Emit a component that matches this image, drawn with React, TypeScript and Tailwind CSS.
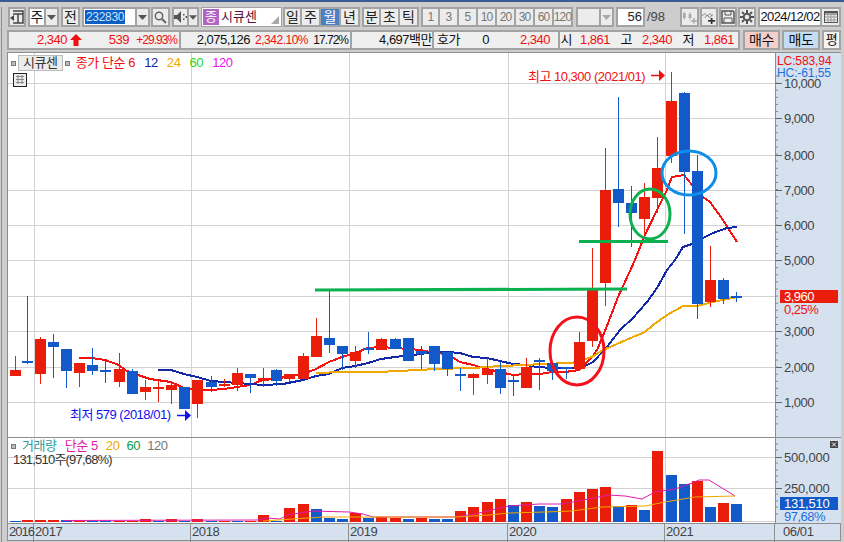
import { ReactNode } from "react";
import { twMerge } from "tailwind-merge";

const RED = "#ea1c0a";
const BLUE = "#1259c9";
const GRID = "#d2d2d2";

// x, wick top, wick bottom, body top, body bottom, up
const candles: [number, number, number, number, number, number][] = [
  [15, 356, 376, 370, 376, 1], [27, 296, 364, 361, 363, 0], [40, 337, 384, 339, 374, 1], [53, 334, 378, 342, 347, 0],
  [66, 349, 388, 349, 371, 0], [79, 363, 387, 363, 373, 1], [92, 348, 375, 365, 371, 0], [105, 359, 383, 370, 372, 0],
  [119, 353, 387, 369, 382, 1], [132, 369, 394, 371, 394, 0], [145, 380, 400, 387, 392, 1], [158, 381, 402, 387, 389, 1],
  [171, 382, 404, 385, 390, 1], [184, 387, 409, 387, 409, 0], [197, 380, 418, 380, 404, 1], [211, 376, 392, 382, 387, 0],
  [224, 379, 387, 384, 386, 1], [237, 368, 391, 373, 385, 1], [250, 374, 393, 374, 378, 0], [263, 368, 387, 378, 381, 1],
  [276, 369, 386, 370, 381, 0], [289, 374, 382, 374, 379, 1], [303, 353, 379, 356, 379, 1], [316, 318, 357, 336, 357, 1],
  [329, 290, 353, 338, 345, 0], [342, 346, 370, 346, 354, 0], [355, 346, 368, 352, 361, 1], [368, 332, 354, 348, 350, 0],
  [381, 338, 350, 339, 350, 1], [395, 338, 349, 339, 349, 0], [408, 338, 361, 338, 361, 0], [421, 346, 369, 351, 354, 0],
  [434, 346, 371, 346, 364, 0], [447, 352, 376, 352, 369, 0], [460, 368, 391, 374, 375, 0], [473, 373, 395, 374, 378, 1],
  [487, 358, 384, 369, 375, 1], [500, 362, 394, 369, 388, 0], [513, 375, 396, 380, 382, 0], [526, 358, 388, 367, 388, 1],
  [539, 358, 390, 360, 362, 0], [552, 363, 380, 363, 371, 0], [566, 367, 379, 367, 369, 0], [579, 332, 370, 342, 369, 1],
  [592, 248, 347, 290, 341, 1], [605, 148, 306, 190, 283, 1], [618, 97, 227, 189, 203, 0], [631, 186, 247, 203, 213, 0],
  [644, 183, 235, 197, 219, 1], [657, 137, 213, 168, 198, 1], [671, 72, 163, 101, 156, 1], [684, 92, 234, 93, 172, 0],
  [697, 155, 319, 171, 304, 0], [710, 246, 307, 280, 302, 1], [723, 278, 304, 280, 299, 0], [736, 292, 302, 296, 298, 0],
];

// top of the volume bar and its colour, same order as candles
const volumes: [number, number][] = [
  [521, 0], [520, 1], [520, 1], [520, 1], [520, 0], [521, 1], [521, 0], [521, 0], [521, 1], [521, 1], [519, 1], [521, 0],
  [519, 1], [521, 0], [519, 1], [521, 0], [521, 1], [521, 0], [521, 1], [515, 1], [521, 0], [508, 1], [504, 1], [509, 0],
  [518, 0], [519, 0], [513, 1], [518, 0], [517, 1], [518, 1], [519, 0], [518, 1], [519, 0], [519, 0], [511, 1], [507, 1],
  [502, 1], [499, 1], [505, 0], [502, 1], [506, 0], [507, 0], [499, 1], [492, 1], [489, 1], [487, 1], [506, 0], [505, 1],
  [510, 0], [451, 1], [475, 0], [484, 0], [481, 1], [507, 0], [503, 1], [504, 0],
];

const ma6 = "79,358 95,358.5 105,360 119,365 125,370 135,374 150,379 171,382 184,388 197,390 211,390 224,389 237,387 250,385 263,380 276,379 289,376 303,374 316,369 329,362 342,357 355,353 368,348 381,347 395,348 408,349 421,350 434,353 447,354 460,362 473,365 487,369 500,372 513,375 526,374 540,374 552,372 565,372 579,370 592,357 597,350 605,331 618,297 635,260 644,237 657,210 666,192 672,177 684,175 692,185 703,197 710,202 723,220 737,242";
const ma12 = "158,370 171,370 184,374 197,377 211,381 224,382 237,383 250,384 263,385 283,384 303,380 316,376 329,374 342,368 355,366 368,363 381,359 395,357 421,354 434,352 447,352 460,353 473,357 487,358 500,361 513,364 526,365 537,367 553,368 570,368 583,367 593,362 607,347 620,330 633,318 647,302 657,288 667,270 675,260 683,247 692,244 703,238 713,233 727,228 737,227";
const ma24 = "316,373 342,372 381,372 395,371 421,370 434,369 473,368 487,367 500,366 526,365 540,364 572,363 585,359 592,357 603,350 617,344 633,337 645,332 653,325 667,315 683,306 697,306 713,302 727,299 737,297";
const volMa5 = "63,520.5 257,520 267,518 280,519 287,515 300,513 313,511 349,512 363,514 373,517 455,517 475,514 509,506 539,504 562,504 609,495 625,496 642,499 655,492 675,489 692,483 699,480 709,480 722,488 735,496";
const volMa20 = "263,521 293,519 323,517 455,517 489,515 509,513 545,512 572,511 602,507 645,506 665,502 695,497 735,496";

const priceAxis: [string, number][] = [
  ["10,000", 83], ["9,000", 118], ["8,000", 155], ["7,000", 190], ["6,000", 225],
  ["5,000", 260], ["3,000", 331], ["2,000", 367], ["1,000", 402],
];
const priceGrid = [83, 118, 155, 190, 225, 260, 296, 331, 367, 402];
const yearLines = [34, 191, 349, 508, 665];
const minorTicks = Array.from({ length: 50 }, (_, i) => 76 + i * 7.1);

function Btn({ w, children, className = "" }: { w: string; children?: ReactNode; className?: string }) {
  return (
    <div className={twMerge("flex h-[20px] shrink-0 items-center justify-center border-2 border-[#a3a3a3] bg-[#ececec] text-[14px] text-[#222]", w, className)}>
      {children}
    </div>
  );
}

function Caret({ color = "#555" }: { color?: string }) {
  return (
    <svg width="9" height="5" viewBox="0 0 9 5">
      <path d="M0 0h9L4.5 5z" fill={color} />
    </svg>
  );
}

function Cell({ w, className = "", children }: { w: string; className?: string; children?: ReactNode }) {
  return <div className={twMerge("shrink-0 text-right", w, className)}>{children}</div>;
}

function Toolbar() {
  return (
    <div className="mt-[5px] ml-[6px] flex h-[20px] items-center">
      <Btn w="w-[18px]">
        <svg width="14" height="14" viewBox="0 0 14 14" fill="none">
          <path d="M3 1h10v12H3M3 4h10M8 4v9" stroke="#444" strokeWidth="1.5" />
          <path d="M0 8l4-3v6z" fill="#444" />
        </svg>
      </Btn>
      <div className="ml-[2px] flex">
        <Btn w="w-[18px]" className="bg-white">주</Btn>
        <Btn w="w-[13px]" className="border-l-0"><Caret /></Btn>
      </div>
      <Btn w="w-[19px]" className="ml-[2px]">전</Btn>
      <div className="ml-[2px] flex">
        <Btn w="w-[55px]" className="justify-start bg-white pl-[1px]">
          <span className="bg-[#0a5fc4] px-[1px] text-[12px] leading-[14px] tracking-[-0.3px] text-[#cfe2ff]">232830</span>
        </Btn>
        <Btn w="w-[13px]" className="border-l-0"><Caret /></Btn>
      </div>
      <Btn w="w-[19px]" className="ml-[1px]">
        <svg width="13" height="13" viewBox="0 0 13 13" fill="none">
          <circle cx="5" cy="5" r="3.7" stroke="#666" strokeWidth="1.5" />
          <path d="M8 8l4 4" stroke="#666" strokeWidth="2" />
        </svg>
      </Btn>
      <div className="ml-[2px] flex">
        <Btn w="w-[17px]">
          <svg width="13" height="12" viewBox="0 0 13 12">
            <path d="M0 4h3l4-4v12l-4-4H0z" fill="#555" />
            <path d="M9 3h1.500v1.500H9zM9 7.500h1.500V9H9zM11.500 5h1.500v2h-1.500z" fill="#555" />
          </svg>
        </Btn>
        <Btn w="w-[10px]" className="border-l-0"><Caret /></Btn>
      </div>
      <div className="relative ml-[2px] flex h-[20px] w-[81px] shrink-0 items-center border border-[#a3a3a3] bg-white">
        <span className="ml-[1px] flex h-[16px] w-[16px] items-center justify-center bg-[#b264c4] text-[13px] text-white">종</span>
        <span className="ml-[2px] text-[13px] text-[#5e0f3a]">시큐센</span>
        <svg className="absolute right-[2px] bottom-[2px]" width="8" height="8" viewBox="0 0 8 8">
          <path d="M8 0v8H0z" fill="#a8a8a8" />
        </svg>
      </div>
      <div className="ml-[1px] flex">
        <Btn w="w-[19px]">일</Btn>
        <Btn w="w-[19px]" className="border-l-0">주</Btn>
        <Btn w="w-[20px]" className="border-l-0 bg-[#4a7fc4] text-white">월</Btn>
        <Btn w="w-[19px]" className="border-l-0">년</Btn>
      </div>
      <div className="ml-[2px] flex">
        <Btn w="w-[19px]">분</Btn>
        <Btn w="w-[19px]" className="border-l-0">초</Btn>
        <Btn w="w-[19px]" className="border-l-0">틱</Btn>
      </div>
      <div className="ml-[2px] flex">
        {["1", "3", "5", "10", "20", "30", "60", "120"].map((n, i) => (
          <Btn key={n} w="w-[19px]" className={`text-[12px] tracking-[-0.8px] text-[#777] ${i ? "border-l-0" : ""}`}>{n}</Btn>
        ))}
      </div>
      <div className="ml-[3px] flex">
        <Btn w="w-[25px]" />
        <Btn w="w-[13px]" className="border-l-0"><Caret color="#aaa" /></Btn>
      </div>
      <Btn w="w-[29px]" className="ml-[2px] justify-end bg-white pr-[1px] text-[13px]">56</Btn>
      <div className="w-[35px] shrink-0 pl-[2px] text-[13px] text-[#444]">/98</div>
      <Btn w="w-[19px]">
        <svg width="16" height="14" viewBox="0 0 16 14" fill="#a8a8a8">
          <path d="M2 1h1v2h1v5H3v2H2V8H1V3h1zM8 2h1v2h1v4H9v2H8V8H7V4h1z" />
          <path d="M12 8h1.500v2.500H16V12h-2.500v2H12v-2H9.500v-1.500H12z" />
        </svg>
      </Btn>
      <Btn w="w-[18px]" className="ml-[1px]">
        <svg width="16" height="14" viewBox="0 0 16 14" fill="none">
          <path d="M0 6l3-3 3 3 3-3 3 3M3 8l3-3 3 3 3-4" stroke="#777" />
          <path d="M10 8h2v2.500h3v2h-3V15h-2v-2.500H7v-2h3z" fill="#333" />
        </svg>
      </Btn>
      <Btn w="w-[18px]" className="ml-[1px]">
        <svg width="14" height="14" viewBox="0 0 14 14" fill="none">
          <path d="M1 1h11l1 1v11H1z" stroke="#555" strokeWidth="1.500" />
          <path d="M4 1v4h6V1M3 13V8h8v5" stroke="#555" />
        </svg>
      </Btn>
      <Btn w="w-[18px]" className="ml-[1px]">
        <svg width="14" height="14" viewBox="0 0 14 14" fill="none">
          <circle cx="7" cy="7" r="3.300" stroke="#555" strokeWidth="2" />
          <path d="M7 0v3M7 11v3M0 7h3M11 7h3M2 2l2 2M10 10l2 2M12 2l-2 2M4 10l-2 2" stroke="#555" strokeWidth="2" />
        </svg>
      </Btn>
      <Btn w="w-[64px]" className="ml-[2px] bg-white text-[13px] tracking-[-0.6px] text-[#111]">2024/12/02</Btn>
      <Btn w="w-[19px]" className="border-l-0">
        <svg width="14" height="12" viewBox="0 0 14 12" fill="none">
          <rect x="0.500" y="0.500" width="13" height="11" stroke="#555" />
          <path d="M0 1.500h14M0 3h14" stroke="#555" />
          <path d="M1 6h12M1 9h12M4 4v7M7 4v7M10 4v7" stroke="#999" />
        </svg>
      </Btn>
    </div>
  );
}

function InfoBar() {
  return (
    <div className="mt-[3px] ml-[5px] flex h-[20px] items-center text-[13px] leading-[16px] tracking-[-0.5px] text-[#111]">
      <div className="flex h-full w-[172px] shrink-0 items-center border-2 border-r-0 border-[#a3a3a3] bg-[#efefef] text-[#f01010]">
        <Cell w="w-[58px]">2,340</Cell>
        <svg className="mx-[3px] shrink-0" width="12" height="12" viewBox="0 0 12 12">
          <path d="M6 0l6 6H8.500v6h-5V6H0z" fill="#f01010" />
        </svg>
        <Cell w="w-[44px]">539</Cell>
        <Cell w="w-[48px]" className="text-[12px] tracking-[-1px]">+29.93%</Cell>
      </div>
      <div className="flex h-full w-[171px] shrink-0 items-center border-2 border-r-0 border-[#a3a3a3] bg-[#efefef]">
        <Cell w="w-[69px]">2,075,126</Cell>
        <Cell w="w-[58px]" className="text-[12px] text-[#f01010]">2,342.10%</Cell>
        <Cell w="w-[40px]" className="text-[12px] tracking-[-1px]">17.72%</Cell>
      </div>
      <div className="flex h-full w-[82px] shrink-0 items-center border-2 border-r-0 border-[#a3a3a3] bg-[#efefef]">
        <Cell w="w-[80px]">4,697백만</Cell>
      </div>
      <div className="flex h-full w-[126px] shrink-0 items-center border-2 border-r-0 border-[#a3a3a3] bg-[#efefef]">
        <Cell w="w-[26px]">호가</Cell>
        <Cell w="w-[29px]">0</Cell>
        <Cell w="w-[61px]" className="text-[#f01010]">2,340</Cell>
      </div>
      <div className="flex h-full w-[182px] shrink-0 items-center border-2 border-[#a3a3a3] bg-[#efefef] text-[#f01010]">
        <Cell w="w-[12px]" className="text-[#111]">시</Cell>
        <Cell w="w-[38px]">1,861</Cell>
        <Cell w="w-[22px]" className="text-[#111]">고</Cell>
        <Cell w="w-[40px]">2,340</Cell>
        <Cell w="w-[22px]" className="text-[#111]">저</Cell>
        <Cell w="w-[40px]">1,861</Cell>
      </div>
      <div className="ml-[3px] flex h-full w-[37px] shrink-0 items-center justify-center border-2 border-[#a3a3a3] bg-[#f4cfc9] text-[14px]">매수</div>
      <div className="ml-[2px] flex h-full w-[38px] shrink-0 items-center justify-center border-2 border-[#a3a3a3] bg-[#c5dcf2] text-[14px]">매도</div>
      <div className="ml-[2px] flex h-full w-[19px] shrink-0 items-center justify-center border-2 border-[#a3a3a3] bg-[#f4f4f4] text-[13px]">평</div>
    </div>
  );
}

function PricePlot() {
  return (
    <svg className="block shrink-0" width="767" height="384" viewBox="8 53 767 384">
      {priceGrid.map((y) => (
        <line key={y} x1="8" x2="775" y1={y} y2={y} stroke={GRID} strokeWidth="1" shapeRendering="crispEdges" />
      ))}
      {yearLines.map((x) => (
        <line key={x} x1={x} x2={x} y1="53" y2="437" stroke={GRID} strokeWidth="1" shapeRendering="crispEdges" />
      ))}
      <polyline points={ma6} fill="none" stroke="#f80f0f" strokeWidth="2" shapeRendering="crispEdges" />
      <polyline points={ma12} fill="none" stroke="#1228a8" strokeWidth="2" shapeRendering="crispEdges" />
      <polyline points={ma24} fill="none" stroke="#f0a800" strokeWidth="2" shapeRendering="crispEdges" />
      {candles.map(([x, wt, wb, bt, bb, up]) => (
        <g key={x} fill={up ? RED : BLUE} shapeRendering="crispEdges">
          <rect x={x - 0.5} y={wt} width="1" height={wb - wt} />
          <rect x={x - 5.5} y={bt} width="11" height={Math.max(bb - bt, 2)} />
        </g>
      ))}
      <line x1="315" y1="290" x2="627" y2="289" stroke="#0bb150" strokeWidth="3" />
      <line x1="579" y1="241.500" x2="668" y2="241.500" stroke="#0bb150" strokeWidth="3" />
      <ellipse cx="577" cy="351" rx="27" ry="34" fill="none" stroke="#f5101c" strokeWidth="3" />
      <ellipse cx="650" cy="214" rx="20" ry="25" fill="none" stroke="#0fb050" strokeWidth="3" />
      <ellipse cx="689" cy="173" rx="27" ry="22" fill="none" stroke="#0f8ee8" strokeWidth="3" />
      <text x="528" y="81" fontSize="13" letterSpacing="-0.5" fill="#f01010">최고 10,300 (2021/01)</text>
      <path d="M651 75.500h8" stroke="#f01010" strokeWidth="1.500" />
      <path d="M659 70l6 5.500-6 5.500z" fill="#f01010" />
      <text x="70" y="419" fontSize="13" letterSpacing="-0.5" fill="#1010f0">최저 579 (2018/01)</text>
      <path d="M177 415.500h8" stroke="#1010f0" strokeWidth="1.500" />
      <path d="M185 410l6 5.500-6 5.500z" fill="#1010f0" />
    </svg>
  );
}

function PriceAxis() {
  return (
    <svg className="block shrink-0" width="66" height="384" viewBox="775 53 66 384">
      <line x1="775.500" x2="775.500" y1="53" y2="437" stroke="#8e8e8e" />
      {minorTicks.map((y) => (
        <line key={y} x1="776" x2="778" y1={y} y2={y} stroke="#888" />
      ))}
      {priceAxis.map(([label, y]) => (
        <g key={label}>
          <line x1="776" x2="782" y1={y + 0.5} y2={y + 0.5} stroke="#666" />
          <text x="784" y={y + 5} fontSize="13" letterSpacing="-0.5" fill="#444">{label}</text>
        </g>
      ))}
      <rect x="780" y="290" width="58" height="13" fill={RED} />
      <text x="784" y="301" fontSize="13" letterSpacing="-0.5" fill="#fff">3,960</text>
      <text x="784" y="314" fontSize="13" letterSpacing="-0.5" fill="#f01010">0,25%</text>
    </svg>
  );
}

function VolumePlot() {
  return (
    <svg className="block shrink-0" width="767" height="85" viewBox="8 438 767 85">
      {[457, 488, 521].map((y) => (
        <line key={y} x1="8" x2="775" y1={y} y2={y} stroke={GRID} shapeRendering="crispEdges" />
      ))}
      {yearLines.map((x) => (
        <line key={x} x1={x} x2={x} y1="437" y2="523" stroke={GRID} shapeRendering="crispEdges" />
      ))}
      {candles.map(([x], i) => (
        <rect key={x} x={x - 5.5} y={volumes[i][0]} width="11" height={522 - volumes[i][0]} fill={volumes[i][1] ? RED : BLUE} shapeRendering="crispEdges" />
      ))}
      <polyline points={volMa5} fill="none" stroke="#e01aa8" strokeWidth="1" />
      <polyline points={volMa20} fill="none" stroke="#f0a800" strokeWidth="1" />
    </svg>
  );
}

function VolumeAxis() {
  return (
    <svg className="block shrink-0" width="66" height="85" viewBox="775 438 66 85">
      <line x1="775.500" x2="775.500" y1="437" y2="523" stroke="#8e8e8e" />
      {[444, 450, 463, 470, 476, 482, 494, 501, 507, 514].map((y) => (
        <line key={y} x1="776" x2="778" y1={y} y2={y} stroke="#888" />
      ))}
      <line x1="776" x2="782" y1="457.500" y2="457.500" stroke="#666" />
      <line x1="776" x2="782" y1="488.500" y2="488.500" stroke="#666" />
      <text x="784" y="462" fontSize="13" letterSpacing="-0.2" fill="#444">500,000</text>
      <text x="784" y="493" fontSize="13" letterSpacing="-0.2" fill="#444">250,000</text>
      <rect x="780" y="497" width="58" height="13" fill={BLUE} />
      <text x="784" y="508" fontSize="13" letterSpacing="-0.2" fill="#fff">131,510</text>
      <text x="784" y="521" fontSize="13" letterSpacing="-0.5" fill="#1b6fe0">97,68%</text>
      <rect x="830" y="441" width="8" height="7" fill="#444" />
      <path d="M832 442.500l4 4M836 442.500l-4 4" stroke="#fff" />
    </svg>
  );
}

export default function App() {
  return (
    <div className="h-[542px] w-[844px] overflow-hidden bg-[#cdcdcd] font-['Liberation_Sans','Noto_Sans_CJK_KR',sans-serif]">
      <div className="h-[2px] bg-[#3c5a96]" />
      <div className="h-[540px] pl-[1px]">
        <div className="h-full border-l border-[#8e8e8e]">
          <Toolbar />
          <InfoBar />

          <div className="relative mt-[2px] ml-[5px] flex h-[385px] w-[834px] border-t border-l border-[#8e8e8e] bg-white">
            <PricePlot />
            <div className="bg-[#d6e1ef]">
              <PriceAxis />
            </div>
            <div className="absolute top-[2px] left-[3px] flex items-center gap-[2px] text-[13px] leading-[14px] tracking-[-0.4px]">
              <span className="h-[5px] w-[5px] border border-[#777] bg-[#bbb]" />
              <span className="border border-[#bbb] bg-[#ececec] px-[4px] text-[#333]">시큐센</span>
              <span className="h-[5px] w-[5px] border border-[#777] bg-[#bbb]" />
              <span className="ml-[4px] text-[#f01010]">종가 단순 6</span>
              <span className="ml-[7px] text-[#1228a8]">12</span>
              <span className="ml-[7px] text-[#f0a800]">24</span>
              <span className="ml-[7px] text-[#22d822]">60</span>
              <span className="ml-[7px] text-[#ee10ee]">120</span>
            </div>
            <svg className="absolute top-[20px] left-[5px]" width="14" height="14" viewBox="0 0 14 14" fill="none">
              <rect x="0.500" y="0.500" width="13" height="13" fill="#eee" stroke="#222" />
              <path d="M3 3.500h8M3 6.500h8M3 9.500h8M5 2v9M9 2v9" stroke="#888" />
            </svg>
            <div className="absolute top-[2px] left-[769px] w-[65px] text-[12px] leading-[12px] tracking-[-0.1px]">
              <div className="text-[#f01010]">LC:583,94</div>
              <div className="text-[#1b6fe0]">HC:-61,55</div>
            </div>
          </div>

          <div className="relative ml-[5px] flex h-[86px] w-[834px] border-t border-l border-[#8e8e8e] bg-white">
            <VolumePlot />
            <div className="bg-[#d6e1ef]">
              <VolumeAxis />
            </div>
            <div className="absolute top-[1px] left-[3px] flex items-center text-[13px] leading-[14px] tracking-[-0.4px]">
              <span className="h-[5px] w-[5px] border border-[#777] bg-[#bbb]" />
              <span className="ml-[6px] text-[#2f9a9a]">거래량</span>
              <span className="ml-[8px] text-[#e01aa8]">단순 5</span>
              <span className="ml-[8px] text-[#f0a800]">20</span>
              <span className="ml-[7px] text-[#0a9a4a]">60</span>
              <span className="ml-[7px] text-[#777]">120</span>
            </div>
            <div className="absolute top-[15px] left-[5px] text-[13px] leading-[14px] tracking-[-0.8px] text-[#333]">131,510주(97,68%)</div>
          </div>

          <div className="ml-[5px] flex h-[18px] w-[834px] items-center border border-[#8e8e8e] bg-[#d6e1ef] text-[13px] tracking-[-0.4px] text-[#444]">
            <div className="w-[26px] shrink-0 border-r border-[#8e8e8e] pl-[1px] tracking-[-1px]">2016</div>
            <div className="w-[157px] shrink-0 border-r border-[#8e8e8e] pl-[1px]">2017</div>
            <div className="w-[158px] shrink-0 border-r border-[#8e8e8e] pl-[1px]">2018</div>
            <div className="w-[159px] shrink-0 border-r border-[#8e8e8e] pl-[1px]">2019</div>
            <div className="w-[157px] shrink-0 border-r border-[#8e8e8e] pl-[1px]">2020</div>
            <div className="w-[110px] shrink-0 border-r border-[#8e8e8e] pl-[1px]">2021</div>
            <div className="pl-[8px]">06/01</div>
          </div>
        </div>
      </div>
    </div>
  );
}
